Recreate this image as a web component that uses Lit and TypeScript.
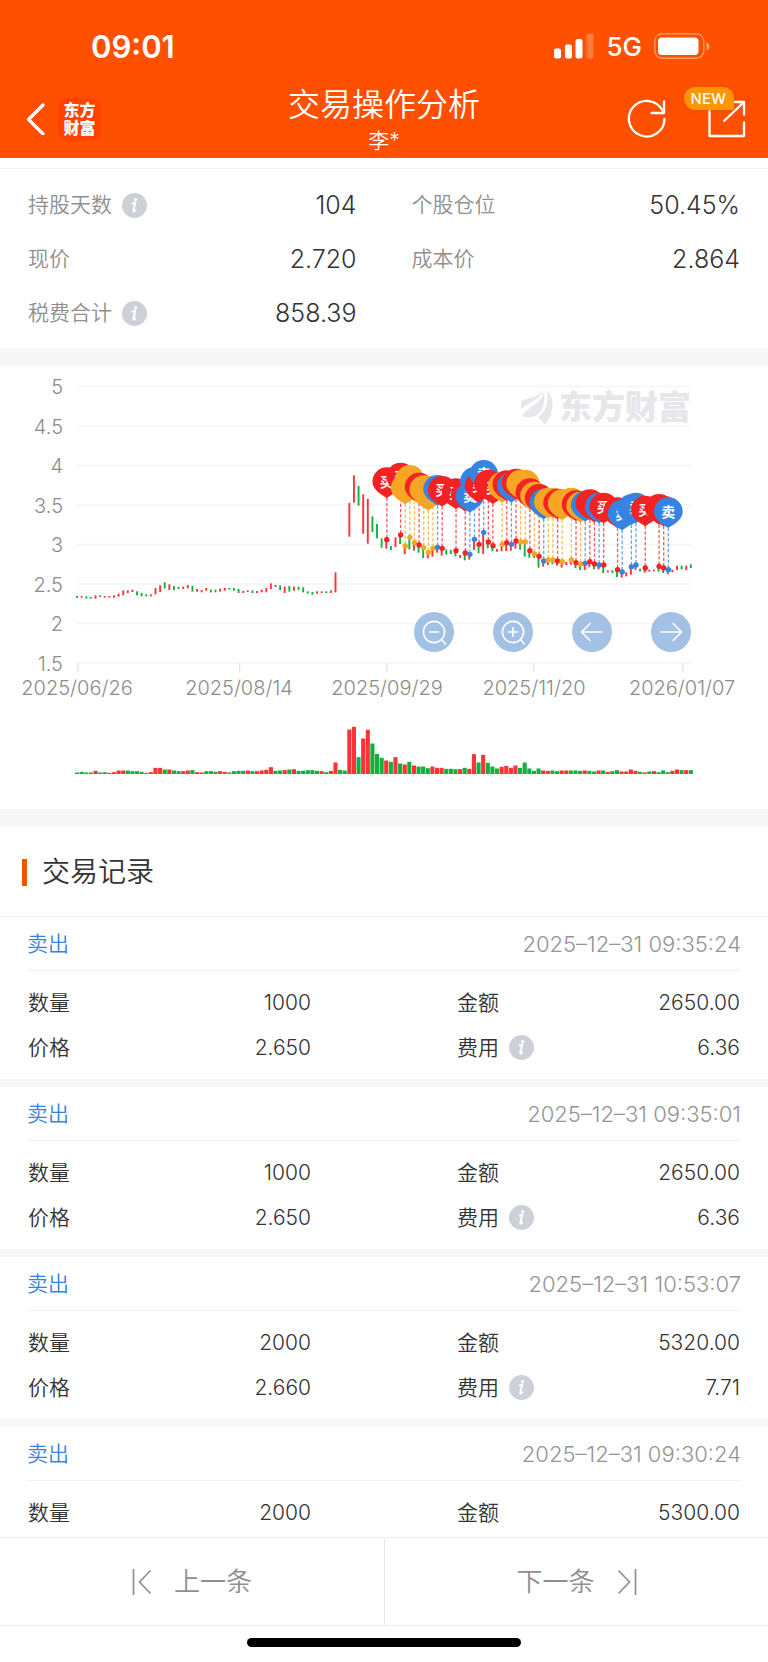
import { LitElement, html, svg, css } from "lit";
import { customElement, property } from "lit/decorators.js";

type Side = "r" | "g";

/* Candles: direction, high, low. Heights are thirds of a pixel down the chart. */
const EARLY =
  "g708-714 r708-713 g709-716 g711-716 r706-716 g706-711 r708-713 r708-713 r706-713 r701-710 r691-706 r691-699 r689-696 g694-706 g699-709 g703-709 r703-709 r684-703 r676-696 g667-685 r673-690 g678-690 g680-687 r680-687 r675-685 g677-695 r687-695 r690-697 r684-692 g689-697 g689-697 r686-695 r684-692 g684-689 g684-692 g687-699 r693-699 r691-696 g691-699 r693-699 r689-697 r684-697 r670-687 r675-681 g676-690 r680-699 g678-695 r680-692 g680-690 g682-697 g694-701 g696-704 r694-701 r694-699 g694-699 r691-699 r637-697 - - r429-530 r346-428 g378-437 r403-521 r417-551 g469-516 g492-535 g535-563";
const LATE =
  "r292-326 g318-330 r292-321 g285-312 r318-342 g292-328 r308-332 g315-338 g323-354 r337-355 r325-350 r322-338 r325-347 g328-344 g330-342 g332-349 r345-354 g338-361 r344-359 r300-330 g312-339 r277-342 g306-325 g317-334 r327-335 r313-334 r310-333 r315-332 r303-326 g306-329 g306-350 g330-353 g342-354 g350-383 r363-380 r360-375 g360-373 r363-377 r365-383 r366-375 r360-374 g368-384 g372-390 r370-390 r365-382 g372-388 r376-388 g375-399 r391-397 g391-399 g389-411 r397-413 r397-409 r380-404 r375-390 g386-394 r384-398 r389-395 r389-394 g378-395 g385-399 r390-402 r389-397 r377-390 g377-388 r377-390 g373-384";
const LATE_SHIFT = 240;

/* Trades: kind (b buy, s sell, t both), day index, marker height. */
const TRADES =
  "b67:299 b70:285 t71:318 t72:292 t73:308 b74:315 t75:323 t76:337 t77:325 s78:322 b79:325 b82:332 b84:339 s85:343 s86:298 b87:313 s88:277 b89:306 b90:317 t92:313 b93:308 s94:313 b95:303 t96:306 t97:306 b98:332 t99:342 b100:349 s101:363 t102:360 t103:360 b104:363 t105:365 t107:360 b108:368 t109:372 s110:370 b111:365 b112:372 s113:375 b114:375 b117:389 s118:396 s120:380 s121:375 b123:384 b126:379 b127:384 s128:389";

const VOLUME =
  "g6 g8 g6 g6 r11 g6 g7 r5 r7 r12 r12 g12 g10 g10 g8 g5 r7 r20 r20 g15 r15 g12 g10 r10 r12 g13 r7 r6 g10 g10 g8 r10 r8 g6 g10 g11 g11 r12 g10 r10 r12 r14 r22 g11 g12 r13 g15 r16 g11 g11 g13 g13 g11 r10 g7 r11 r36 g14 g12 r135 r143 g52 r108 r134 g93 g62 g50 r42 g38 r52 g33 r30 g38 r27 g24 g24 g19 r24 r20 r20 g17 g17 g16 r16 g20 r17 r61 g36 r59 g35 g24 g18 r23 r26 r20 r27 g20 g36 g18 g11 g18 r12 r11 g12 g10 r12 r12 g12 g12 g11 r12 g11 g9 r12 g12 r8 g10 g13 r9 r9 r15 r11 g8 r6 g9 r10 g7 g12 g7 r11 r15 g13 r13 g13";

const STEP = 4.615;
const dayX = (i: number) => 77 + i * STEP;
const FILL = { r: "#ff3237", g: "#12b03e" };
const PIN = { b: "#f52224", s: "#3683e2", t: "#f6a623" };
const MARK = { b: "买", s: "卖", t: "T" };

const parseCandles = (data: string, shift: number) =>
  data.split(" ").map((item) => {
    if (item === "-") return null;
    const [hi, lo] = item.slice(1).split("-").map((v) => (Number(v) + shift) / 3);
    return { side: item[0] as Side, hi, lo };
  });

const candles = [...parseCandles(EARLY, 0), ...parseCandles(LATE, LATE_SHIFT)];
const volume = VOLUME.split(" ").map((v) => ({ side: v[0] as Side, h: Number(v.slice(1)) / 3 - 0.5 }));
const trades = TRADES.split(" ").map((t) => {
  const [day, y] = t.slice(1).split(":").map(Number);
  return { kind: t[0] as "b" | "s" | "t", day, x: dayX(day) + 0.6, y: (y + LATE_SHIFT) / 3 };
});
/* A pin keeps its label only while the next pin leaves part of it in view. */
const labelled = trades.map((t, i) => {
  const next = trades[i + 1];
  return !next || next.day - t.day > 1 || Math.abs(next.y - t.y) > 9;
});

@customElement("info-button")
export class InfoButton extends LitElement {
  @property() label = "";
  static styles = css`
    :host { display: inline-flex; }
    button { display: flex; padding: 0; border: 0; background: none; cursor: pointer; }
  `;
  render() {
    return html`<button aria-label=${this.label + "说明"}>
      <svg width="25" height="25" viewBox="0 0 25 25">
        <circle cx="12.5" cy="12.5" r="12.5" fill="#cdd0d6" />
        <circle cx="13.700" cy="6.500" r="1.600" fill="#fff" />
        <path d="M10.300 10.600c1.300-.3 2.200-.7 3-1.200l-2 8.400c-.2 1.100.6 1 2-.3" fill="none" stroke="#fff" stroke-width="2" stroke-linejoin="round" stroke-linecap="round" />
      </svg>
    </button>`;
  }
}

@customElement("trade-chart")
export class TradeChart extends LitElement {
  static styles = css`
    :host { display: grid; background: #fff; }
    .plot { grid-area: 1 / 1; display: block; width: 100%; height: auto; }
    .axis { font-size: 20px; font-weight: 300; fill: #8c8c8c; }
    .mark { font-size: 14px; font-weight: 700; fill: #fff; }
    .brand { font-size: 33px; font-weight: 900; fill: #e6e6eb; }
    .tools {
      grid-area: 1 / 1;
      align-self: end;
      justify-self: end;
      display: flex;
      gap: 39px;
      margin: 0 10% 157px 0;
    }
    .tool {
      display: flex;
      width: 40px;
      height: 40px;
      padding: 0;
      border: 0;
      border-radius: 50%;
      background: rgba(134, 174, 221, 0.76);
      cursor: pointer;
    }
  `;

  private tool(label: string, shape: unknown) {
    return html`<button class="tool" aria-label=${label}>
      <svg width="40" height="40" viewBox="0 0 40 40" fill="none" stroke="#fff" stroke-width="1.6" stroke-linecap="round" stroke-linejoin="round">${shape}</svg>
    </button>`;
  }

  render() {
    const levels = ["5", "4.5", "4", "3.5", "3", "2.5", "2", "1.5"];
    const dates: [number, number, string][] = [
      [78, 77, "2025/06/26"],
      [239.5, 239, "2025/08/14"],
      [386.7, 387, "2025/09/29"],
      [533.7, 534, "2025/11/20"],
      [682.7, 682, "2026/01/07"],
    ];
    return html`
      <svg class="plot" viewBox="0 6 768 443" role="img" aria-label="股价与买卖点">
        ${levels.map((t, i) => {
          const y = 26.5 + i * 39.5;
          return svg`<line x1="77" x2="691" y1=${y} y2=${y} stroke="#f4f4f5" stroke-width="1.5" />
            <text class="axis" x="63" y=${y + 7.5} text-anchor="end">${t}</text>`;
        })}
        ${dates.map(
          ([x, tx, t]) => svg`<line x1=${x} x2=${x} y1="303" y2="312.500" stroke="#e9e9ea" stroke-width="1.5" />
            <text class="axis" x=${tx} y="335" text-anchor="middle">${t}</text>`,
        )}
        <g fill="#e6e6eb">
          <path d="M521 41.500C527 37 536 39 543 30.500C541 39 530 41 521 49.500z" />
          <path d="M544 31C541 46 528 46 522 56C534 61 547 52 544 31z" />
          <path d="M547 31C554.500 37 555 53 545 64L538 57.500C545 52 549 43 547 31z" />
        </g>
        <text class="brand" x="559" y="59">东方财富</text>
        ${candles.map((c, i) =>
          c ? svg`<rect x=${dayX(i) - 0.9} y=${c.hi} width="1.9" height=${c.lo - c.hi} fill=${FILL[c.side]} />` : null,
        )}
        ${trades.map(
          (t) => svg`<line x1=${t.x} x2=${t.x} y1=${t.y - 42} y2=${t.y} stroke=${PIN[t.kind]} stroke-opacity=".75" stroke-width="1.3" stroke-dasharray="3.300 2" />
            <circle cx=${t.x} cy=${t.y} r="2.700" fill=${PIN[t.kind]} />`,
        )}
        ${trades.map(
          (t, i) => svg`<g transform=${`translate(${t.x} ${t.y - 58})`}>
            <path d="M0 16.400C-2 14.300-14.300 9.500-14.300 0a14.300 14.300 0 0 1 28.600 0C14.300 9.500 2 14.300 0 16.400z" fill=${PIN[t.kind]} />
            ${labelled[i] ? svg`<text class="mark" y="5" text-anchor="middle">${MARK[t.kind]}</text>` : null}
          </g>`,
        )}
        ${volume.map(
          (v, i) => svg`<rect x=${dayX(i) - 2} y=${414 - v.h} width="4.100" height=${v.h} fill=${FILL[v.side]} />`,
        )}
      </svg>
      <div class="tools">
        ${this.tool("缩小", svg`<circle cx="20" cy="20" r="10.600" /><path d="M27.500 27.500l4 4.500M15.500 20h9" />`)}
        ${this.tool("放大", svg`<circle cx="20" cy="20" r="10.600" /><path d="M27.500 27.500l4 4.500M15.500 20h9M20 15.500v9" />`)}
        ${this.tool("向左", svg`<path d="M30 20H10M18 11.500L9.500 20l8.500 8.500" />`)}
        ${this.tool("向右", svg`<path d="M10 20h20M22 11.500l8.500 8.500-8.500 8.500" />`)}
      </div>
    `;
  }
}

@customElement("trade-record")
export class TradeRecord extends LitElement {
  @property() time = "";
  @property() qty = "";
  @property() amount = "";
  @property() price = "";
  @property() fee = "";
  static styles = css`
    :host { display: block; background: #fff; font-size: 21px; line-height: 26px; color: #333; }
    .head {
      display: flex;
      align-items: center;
      justify-content: space-between;
      height: 53px;
      margin: 0 27px;
      border-bottom: 1px solid #f2f2f3;
    }
    .side { color: #3683e2; }
    .time { color: #949494; font-size: 22px; font-weight: 300; }
    .body {
      display: grid;
      grid-template-columns: 1fr 1fr;
      column-gap: 146px;
      margin: 0;
      padding: 9px 28px;
    }
    .pair { display: flex; align-items: center; justify-content: space-between; height: 45px; }
    dt { display: flex; align-items: center; gap: 10px; }
    dd { margin: 0; }
  `;
  render() {
    return html`
      <div class="head"><span class="side">卖出</span><time class="time">${this.time}</time></div>
      <dl class="body">
        <div class="pair"><dt>数量</dt><dd>${this.qty}</dd></div>
        <div class="pair"><dt>金额</dt><dd>${this.amount}</dd></div>
        <div class="pair"><dt>价格</dt><dd>${this.price}</dd></div>
        <div class="pair"><dt>费用<info-button label="费用"></info-button></dt><dd>${this.fee}</dd></div>
      </dl>
    `;
  }
}

@customElement("app-root")
export class AppRoot extends LitElement {
  static styles = css`
    :host {
      display: flex;
      flex-direction: column;
      height: 100vh;
      background: #fff;
      color: #333;
      font-family: Inter, "Noto Sans CJK SC", sans-serif;
      font-weight: 350;
    }
    button { font: inherit; color: inherit; background: none; border: 0; padding: 0; cursor: pointer; }
    .top { flex: none; background: #ff5000; color: #fff; }
    .status {
      display: flex;
      align-items: center;
      justify-content: space-between;
      height: 38px;
      padding: 27px 57px 20px 91px;
    }
    .clock { font-size: 31px; font-weight: 600; }
    .signals { display: flex; align-items: center; gap: 12px; }
    .net { font-size: 26px; font-weight: 500; }
    .nav {
      display: grid;
      grid-template-columns: 1fr auto 1fr;
      align-items: center;
      padding: 0 22px 5px;
    }
    .left { display: flex; align-items: center; gap: 12px; }
    .left button, .right button { display: flex; }
    .app {
      display: grid;
      place-content: center;
      width: 43px;
      height: 43px;
      border-radius: 10px;
      background: #ff4203;
      color: #fff;
      font-size: 16px;
      line-height: 18px;
      font-weight: 900;
      text-decoration: none;
    }
    .titles { display: grid; gap: 6px; padding-top: 2px; justify-items: center; }
    h1 { margin: 0; font-size: 32px; line-height: 36px; font-weight: 350; }
    .name { font-size: 21px; line-height: 24px; }
    .right { display: flex; align-items: center; justify-content: end; gap: 41px; }
    .share { position: relative; }
    .badge {
      position: absolute;
      right: 12px;
      top: -12px;
      padding: 0 8px 0 7px;
      border-radius: 12px 12px 2px 12px;
      background: #ff9500;
      font-size: 15px;
      line-height: 23px;
      font-weight: 500;
      box-shadow: 0 1px 3px rgba(190, 60, 0, 0.35);
    }
    main { flex: 1; min-height: 0; overflow-y: auto; scrollbar-width: none; background: #f7f7f7; }
    .stats {
      display: grid;
      grid-template-columns: 1fr 1fr;
      column-gap: 55px;
      margin: 0;
      padding: 20px 28px 8px;
      background: linear-gradient(#fff 10px, #f3f3f4 10px, #f3f3f4 11px, #fff 11px);
    }
    .stat { display: flex; align-items: center; justify-content: space-between; height: 54px; }
    dt { display: flex; align-items: center; gap: 10px; font-size: 21px; line-height: 26px; color: #8f8f8f; }
    dd { margin: 0; font-size: 25px; }
    trade-chart { margin: 18px 0; }
    .records { display: grid; gap: 8px; }
    .heading { padding: 26px 22px 25px; background: #fff; border-bottom: 1px solid #f2f2f3; }
    h2 {
      display: flex;
      align-items: center;
      gap: 15px;
      margin: 0;
      font-size: 28px;
      line-height: 38px;
      font-weight: 350;
    }
    h2::before { content: ""; width: 5px; height: 27px; background: #f25500; }
    .pager { flex: none; display: grid; grid-template-columns: 1fr 1fr; background: #fff; border: solid #ededee; border-width: 1px 0; }
    .pager button {
      display: flex;
      align-items: center;
      justify-content: center;
      gap: 22px;
      height: 87px;
      font-size: 26px;
      line-height: 32px;
      color: #8f8f8f;
    }
    .pager button + button { border-left: 1px solid #e6e6e8; }
    .home { flex: none; display: grid; place-items: center; height: 36px; }
    .home::before { content: ""; width: 274px; height: 9px; border-radius: 5px; background: #000; margin-bottom: 4px; }
  `;

  render() {
    const stats: [string, string, boolean][] = [
      ["持股天数", "104", true],
      ["个股仓位", "50.45%", false],
      ["现价", "2.720", false],
      ["成本价", "2.864", false],
      ["税费合计", "858.39", true],
    ];
    const records = [
      ["2025–12–31 09:35:24", "1000", "2650.00", "2.650", "6.36"],
      ["2025–12–31 09:35:01", "1000", "2650.00", "2.650", "6.36"],
      ["2025–12–31 10:53:07", "2000", "5320.00", "2.660", "7.71"],
      ["2025–12–31 09:30:24", "2000", "5300.00", "2.650", "7.65"],
    ];
    return html`
      <header class="top">
        <div class="status">
          <span class="clock">09:01</span>
          <div class="signals">
            <svg width="40" height="26" viewBox="0 0 40 26" fill="#fff">
              <rect x="0" y="15.500" width="7" height="10" rx="2" />
              <rect x="11" y="11.500" width="7" height="14" rx="2" />
              <rect x="21.500" y="6" width="7" height="19.500" rx="2" />
              <rect x="32.500" y="0.500" width="7" height="25" rx="2" opacity=".25" />
            </svg>
            <span class="net">5G</span>
            <svg width="57" height="26" viewBox="0 0 57 26">
              <rect x="0.800" y="0.800" width="49" height="24.400" rx="7.500" fill="none" stroke="#fff" stroke-opacity=".4" stroke-width="1.500" />
              <rect x="4" y="4.500" width="40.500" height="17.500" rx="4" fill="#fff" />
              <path d="M52.500 9.500c4 1 4 6.500 0 7.500z" fill="#fff" fill-opacity=".5" />
            </svg>
          </div>
        </div>
        <div class="nav">
          <div class="left">
            <button aria-label="返回">
              <svg width="24" height="32" viewBox="0 0 24 32" fill="none" stroke="#fff" stroke-width="3.200" stroke-linecap="round" stroke-linejoin="round"><path d="M21 2L6.500 16.500 21 31" /></svg>
            </button>
            <a class="app" href="#">东方<br />财富</a>
          </div>
          <div class="titles">
            <h1>交易操作分析</h1>
            <span class="name">李*</span>
          </div>
          <div class="right">
            <button aria-label="刷新">
              <svg width="40" height="40" viewBox="0 0 40 40" fill="none" stroke="#fff" stroke-width="2.300" stroke-linejoin="round" stroke-linecap="round"><path d="M37.500 20A17.800 17.800 0 1 1 35.500 11.500M37 2.500v11.500H24.500" /></svg>
            </button>
            <button class="share" aria-label="分享">
              <svg width="38" height="40" viewBox="0 0 38 40" fill="none" stroke="#fff" stroke-width="2.300" stroke-linejoin="round"><path d="M1.500 6.500v30.500h34.500V22.500M25.500 3h10.500v13.500M36 3L15.500 22.500" /></svg>
              <span class="badge">NEW</span>
            </button>
          </div>
        </div>
      </header>
      <main>
        <dl class="stats">
          ${stats.map(
            ([label, value, info]) => html`<div class="stat">
              <dt>${label}${info ? html`<info-button label=${label}></info-button>` : null}</dt>
              <dd>${value}</dd>
            </div>`,
          )}
        </dl>
        <trade-chart></trade-chart>
        <div class="heading"><h2>交易记录</h2></div>
        <div class="records">
          ${records.map(
            ([time, qty, amount, price, fee]) =>
              html`<trade-record .time=${time} .qty=${qty} .amount=${amount} .price=${price} .fee=${fee}></trade-record>`,
          )}
        </div>
      </main>
      <nav class="pager">
        <button>
          <svg width="20" height="26" viewBox="0 0 20 26" fill="none" stroke="#8f8f8f" stroke-width="1.700"><path d="M1.500 0v26M18.500 1.500L7.500 13l11 11.500" /></svg>
          上一条
        </button>
        <button>
          下一条
          <svg width="20" height="26" viewBox="0 0 20 26" fill="none" stroke="#8f8f8f" stroke-width="1.700"><path d="M18.500 0v26M1.500 1.500L12.500 13l-11 11.500" /></svg>
        </button>
      </nav>
      <div class="home"></div>
    `;
  }
}
